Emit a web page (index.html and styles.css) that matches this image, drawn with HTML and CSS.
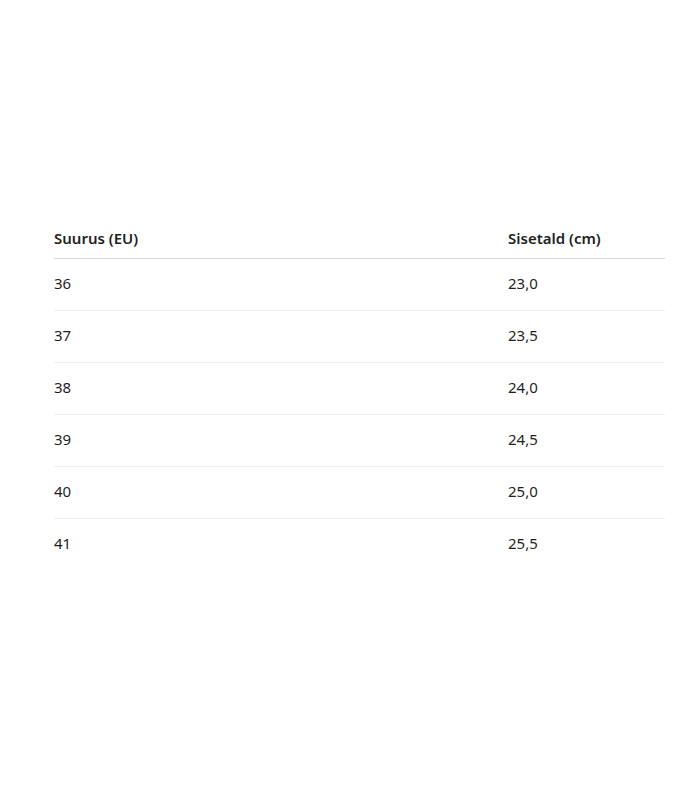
FILE: index.html
```html
<!DOCTYPE html>
<html lang="et">
<head>
<meta charset="utf-8">
<title>Suurustabel</title>
<link rel="stylesheet" href="styles.css">
</head>
<body>
<div class="page">
  <table class="size-table">
    <thead>
      <tr><th class="col-a">Suurus (EU)</th><th>Sisetald (cm)</th></tr>
    </thead>
    <tbody>
      <tr><td>36</td><td>23,0</td></tr>
      <tr><td>37</td><td>23,5</td></tr>
      <tr><td>38</td><td>24,0</td></tr>
      <tr><td>39</td><td>24,5</td></tr>
      <tr><td>40</td><td>25,0</td></tr>
      <tr><td>41</td><td>25,5</td></tr>
    </tbody>
  </table>
</div>
</body>
</html>
```
FILE: styles.css
```css
html, body {
  margin: 0;
  background: #fff;
}
.page {
  padding: 219px 35px 0 54px;
  font-family: "Noto Sans", "Open Sans", sans-serif;
  color: #1f1f1f;
}
.size-table {
  width: 611px;
  border-collapse: collapse;
  font-size: 15px;
}
.size-table th {
  text-align: left;
  font-weight: 600;
  line-height: 20px;
  padding: 9px 0 10px;
  border-bottom: 1px solid #d8d8d8;
}
.size-table .col-a {
  width: 454px;
}
.size-table td {
  line-height: 19px;
  padding: 15px 0 17px;
  border-bottom: 1px solid #eeeeee;
}
.size-table tbody tr:last-child td {
  border-bottom: none;
}
```
